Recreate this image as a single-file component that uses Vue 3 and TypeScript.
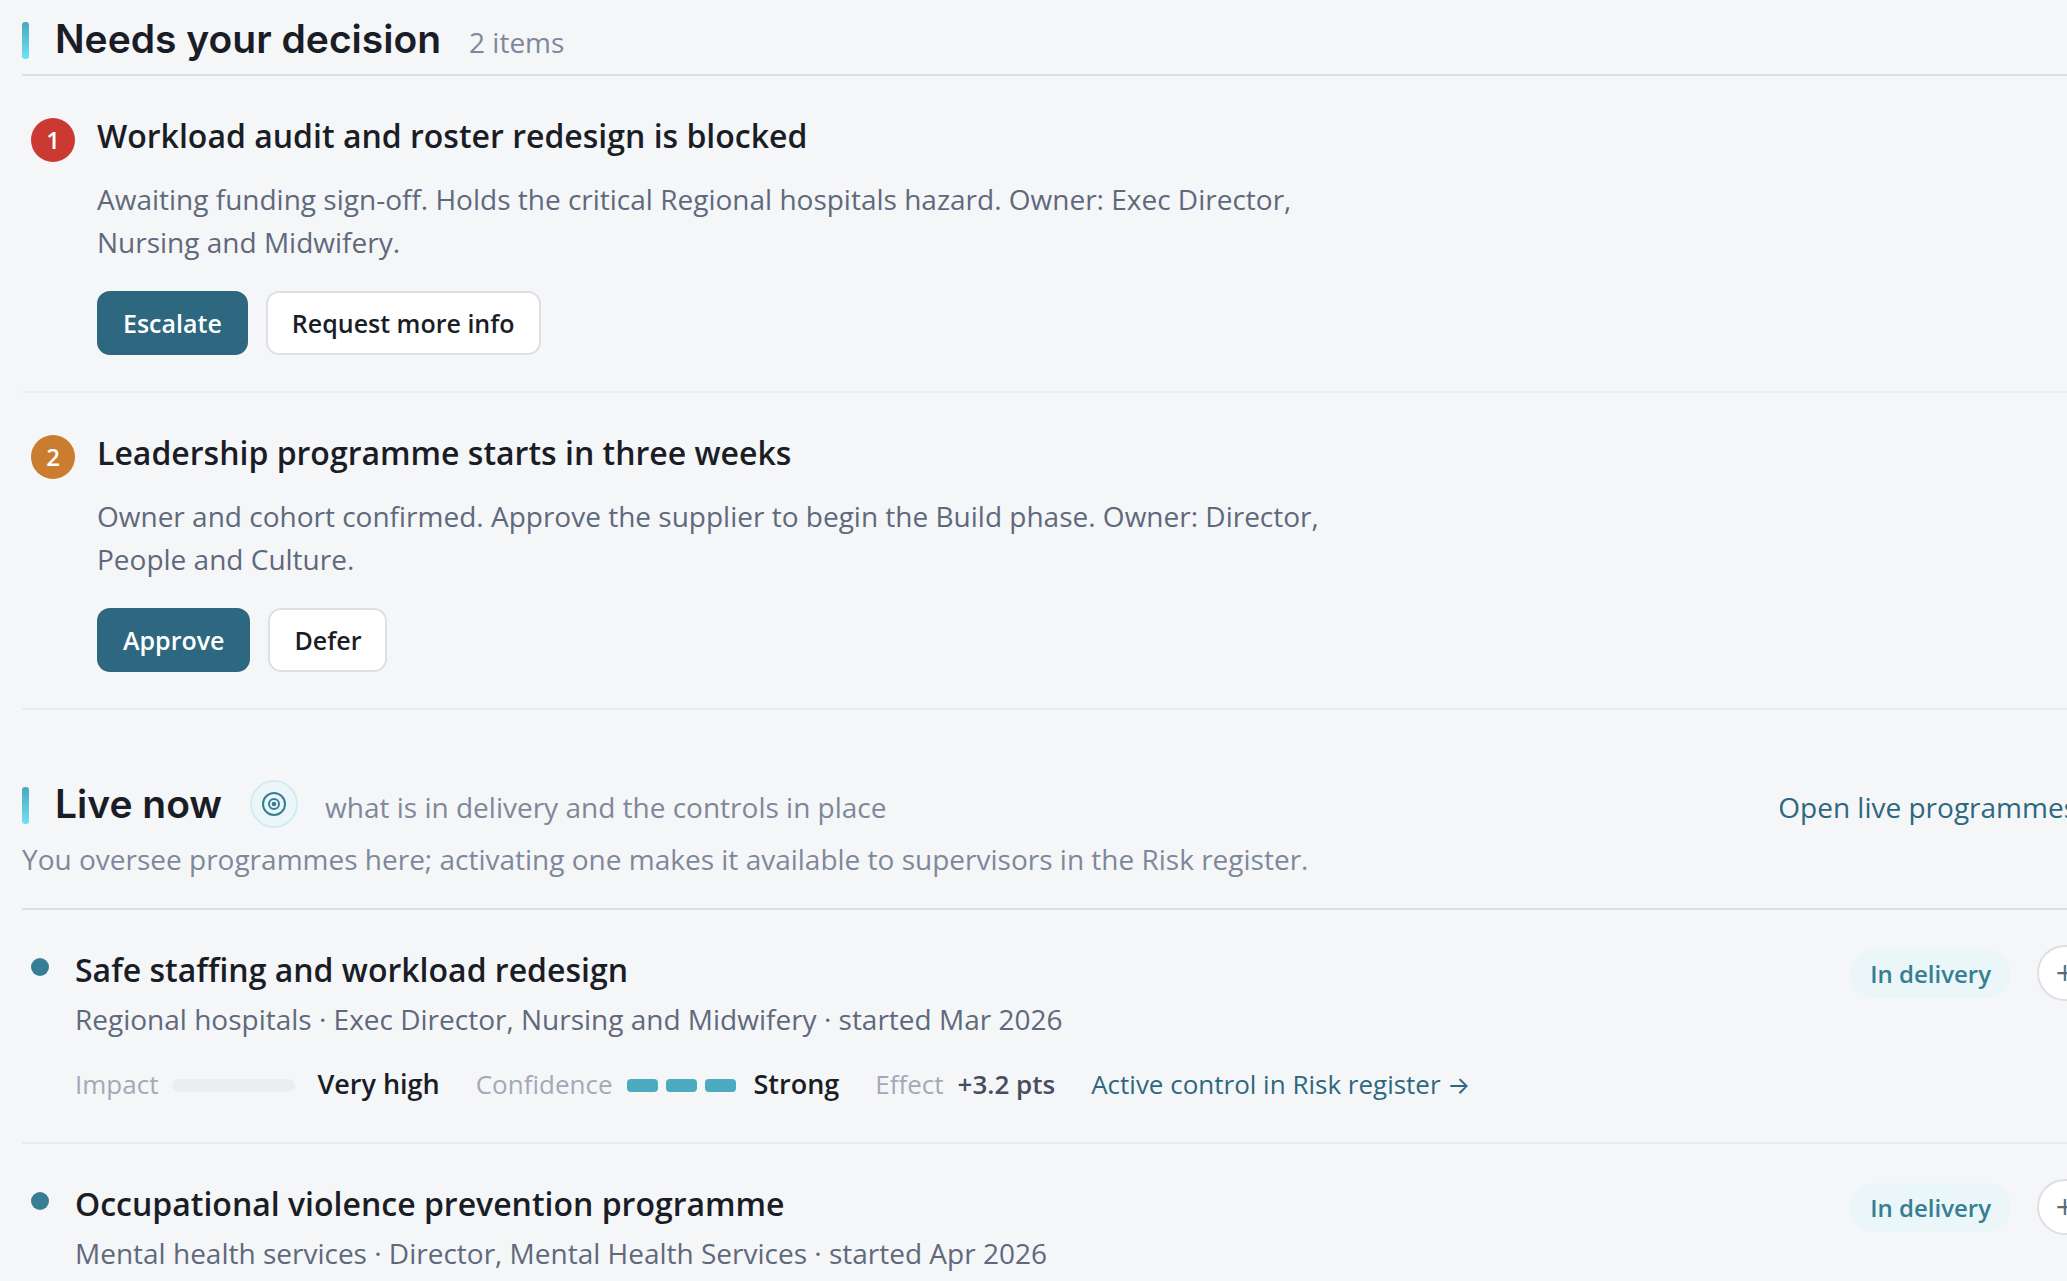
<script setup lang="ts">
interface Decision {
  id: number
  tone: 'critical' | 'warning'
  title: string
  detail: string
  primary: string
  secondary: string
}

interface Metrics {
  impact: string
  confidence: string
  effect: string
}

interface Programme {
  title: string
  summary: string
  metrics?: Metrics
}

const decisions: Decision[] = [
  {
    id: 1,
    tone: 'critical',
    title: 'Workload audit and roster redesign is blocked',
    detail:
      'Awaiting funding sign-off. Holds the critical Regional hospitals hazard. Owner: Exec Director, Nursing and Midwifery.',
    primary: 'Escalate',
    secondary: 'Request more info',
  },
  {
    id: 2,
    tone: 'warning',
    title: 'Leadership programme starts in three weeks',
    detail:
      'Owner and cohort confirmed. Approve the supplier to begin the Build phase. Owner: Director, People and Culture.',
    primary: 'Approve',
    secondary: 'Defer',
  },
]

const programmes: Programme[] = [
  {
    title: 'Safe staffing and workload redesign',
    summary: 'Regional hospitals · Exec Director, Nursing and Midwifery · started Mar 2026',
    metrics: { impact: 'Very high', confidence: 'Strong', effect: '+3.2 pts' },
  },
  {
    title: 'Occupational violence prevention programme',
    summary: 'Mental health services · Director, Mental Health Services · started Apr 2026',
  },
]
</script>

<template>
  <main class="page">
    <div class="content">
      <section>
        <header class="section-head">
          <div class="head-row">
            <span class="accent"></span>
            <h2>Needs your decision</h2>
            <span class="note">2 items</span>
          </div>
        </header>
        <article v-for="d in decisions" :key="d.id" class="decision">
          <span class="number" :class="d.tone">{{ d.id }}</span>
          <div>
            <h3>{{ d.title }}</h3>
            <p class="detail">{{ d.detail }}</p>
            <div class="actions">
              <button type="button" class="btn primary">{{ d.primary }}</button>
              <button type="button" class="btn">{{ d.secondary }}</button>
            </div>
          </div>
        </article>
      </section>

      <section class="live">
        <header class="section-head described">
          <div class="head-row">
            <span class="accent"></span>
            <h2>Live now</h2>
            <span class="target">
              <svg viewBox="0 0 24 24" width="24" height="24" fill="none" stroke="currentColor" stroke-width="2" aria-hidden="true">
                <circle cx="12" cy="12" r="11" />
                <circle cx="12" cy="12" r="5" />
                <circle cx="12" cy="12" r="2.3" fill="currentColor" stroke="none" />
              </svg>
            </span>
            <span class="note">what is in delivery and the controls in place</span>
            <a href="#live" class="note open-link">Open live programmes</a>
          </div>
          <p class="note">
            You oversee programmes here; activating one makes it available to supervisors in the Risk register.
          </p>
        </header>
        <article v-for="p in programmes" :key="p.title" class="programme">
          <span class="dot"></span>
          <div class="programme-body">
            <h3>{{ p.title }}</h3>
            <p class="summary">{{ p.summary }}</p>
            <div v-if="p.metrics" class="metrics">
              <span class="metric">
                <span class="label">Impact</span>
                <span class="track"></span>
                <strong class="rating">{{ p.metrics.impact }}</strong>
              </span>
              <span class="metric">
                <span class="label">Confidence</span>
                <span class="segments"><i></i><i></i><i></i></span>
                <strong class="rating">{{ p.metrics.confidence }}</strong>
              </span>
              <span class="metric">
                <span class="label">Effect</span>
                <strong class="effect">{{ p.metrics.effect }}</strong>
              </span>
              <a href="#register">Active control in Risk register <span class="arrow">→</span></a>
            </div>
          </div>
          <div class="status">
            <span class="pill">In delivery</span>
            <button type="button" class="expand" aria-label="Expand">+</button>
          </div>
        </article>
      </section>
    </div>
  </main>
</template>

<style>
html,
body {
  background: #f5f6f8;
}
body {
  margin: 0;
}
</style>

<style scoped>
.page {
  height: 100vh;
  overflow: hidden;
  background: #f5f6f8;
  color: #1b1d26;
  font-family: "Open Sans", "Noto Sans", sans-serif;
  font-size: 28px;
  line-height: 40px;
}
/* The panel runs on past the right edge of the window. */
.content {
  margin: 0 -35px 0 22px;
  padding-top: 15px;
}
h2,
h3,
p {
  margin: 0;
}
a {
  color: #2d6880;
  text-decoration: none;
}
.section-head {
  padding-bottom: 11px;
  border-bottom: 2px solid #dddfe5;
}
.described {
  padding-bottom: 29px;
}
.described p {
  margin-top: 11px;
}
.head-row {
  display: flex;
  align-items: baseline;
}
.accent {
  align-self: flex-end;
  width: 7px;
  height: 37px;
  margin-bottom: 4px;
  border-radius: 3px;
  background: linear-gradient(#4aa8be, #70e1f3);
}
h2 {
  margin: 0 28px 0 26px;
  font-family: Inter, sans-serif;
  font-size: 39px;
  font-weight: 600;
  line-height: 48px;
}
.note {
  color: #7f889a;
}
.target {
  display: flex;
  align-self: flex-end;
  align-items: center;
  justify-content: center;
  box-sizing: border-box;
  width: 48px;
  height: 48px;
  margin-right: 27px;
  border: 2px solid #d5ebf2;
  border-radius: 50%;
  background: #eaf6f8;
  color: #377d94;
}
.open-link {
  margin: 0 25px 0 auto;
  color: #2d6880;
}
.live {
  margin-top: 70px;
}
.decision {
  display: flex;
  gap: 22px;
  padding: 38px 9px 36px;
  border-bottom: 2px solid #ebecf0;
}
.number {
  flex: none;
  width: 44px;
  height: 44px;
  margin-top: 4px;
  border-radius: 50%;
  color: #fff;
  font-size: 24px;
  font-weight: 600;
  line-height: 44px;
  text-align: center;
}
.critical {
  background: #ca3a33;
}
.warning {
  background: #ca7c2f;
}
h3 {
  font-size: 32px;
  font-weight: 600;
  line-height: 44px;
}
.detail {
  max-width: 1230px;
  margin: 20px 0 27px;
  color: #5f697c;
  line-height: 43px;
}
.actions {
  display: flex;
  gap: 18px;
}
.btn {
  box-sizing: border-box;
  height: 64px;
  padding: 0 24px;
  border: 2px solid #dddfe5;
  border-radius: 13px;
  background: #fff;
  color: #1b1d26;
  font-family: inherit;
  font-size: 25px;
  font-weight: 600;
}
.primary {
  border-color: #2d6880;
  background: #2d6880;
  color: #fff;
}
.programme {
  display: flex;
  align-items: flex-start;
  padding: 35px 9px 38px;
  border-bottom: 2px solid #ebecf0;
}
.dot {
  width: 18px;
  height: 18px;
  margin: 13px 26px 0 0;
  border-radius: 50%;
  background: #377d94;
}
.programme-body {
  flex: 1;
  padding-top: 3px;
}
.summary {
  margin-top: 7px;
  color: #5f697c;
}
.metrics {
  display: flex;
  gap: 36px;
  margin-top: 25px;
  font-size: 26px;
}
.metric {
  display: flex;
  align-items: center;
}
.label {
  margin-right: 14px;
  color: #a3a9b6;
}
.track {
  width: 123px;
  height: 13px;
  margin: 2px 22px 0 0;
  border-radius: 7px;
  background: #ecedf1;
}
.segments {
  display: flex;
  gap: 8px;
  margin: 2px 18px 0 0;
}
.segments i {
  width: 31px;
  height: 13px;
  border-radius: 4px;
  background: #4dabc1;
}
strong {
  font-weight: 600;
}
.rating {
  font-size: 27px;
}
.effect {
  color: #454d5f;
}
.arrow {
  font-family: Inter, sans-serif;
  font-size: 24px;
  line-height: 24px;
}
.status {
  display: flex;
  align-items: center;
  gap: 26px;
}
.pill {
  padding: 0 20px;
  border-radius: 25px;
  background: #eaf6f8;
  color: #377d94;
  font-size: 24px;
  font-weight: 600;
  line-height: 49px;
}
.expand {
  box-sizing: border-box;
  width: 56px;
  height: 56px;
  padding: 0;
  border: 2px solid #dddfe5;
  border-radius: 50%;
  background: #fff;
  color: #5f697c;
  font-family: inherit;
  font-size: 32px;
  line-height: 48px;
}
</style>
